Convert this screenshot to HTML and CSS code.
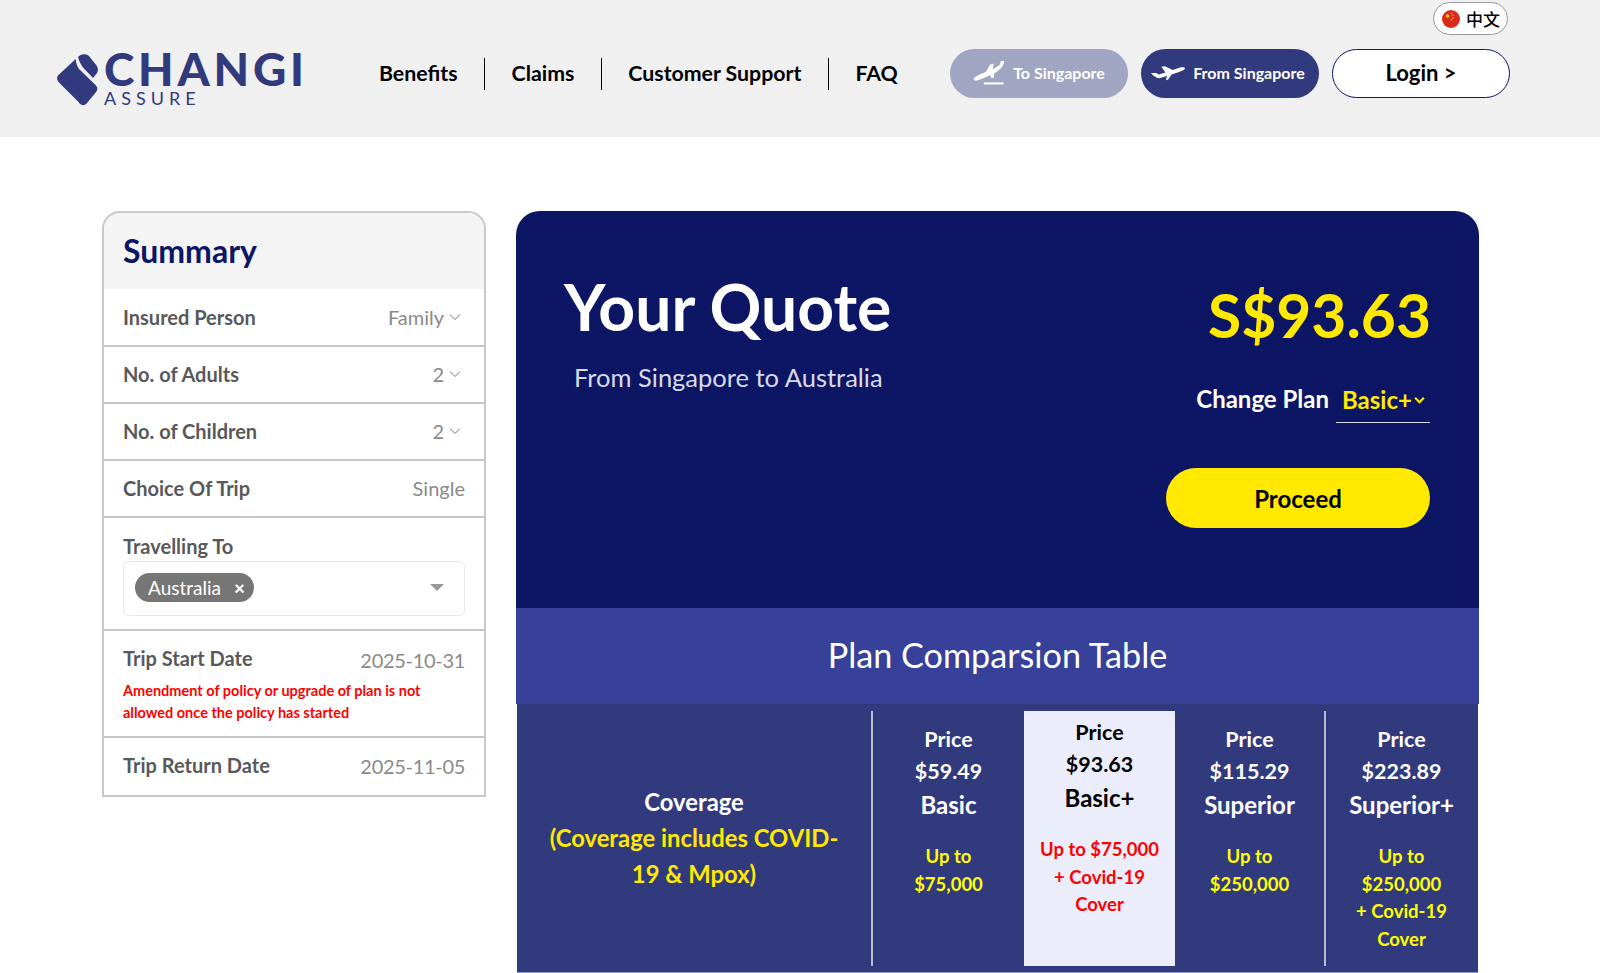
FILE: index.html
```html
<!DOCTYPE html>
<html lang="en">
<head>
    <meta charset="UTF-8">
    <meta name="viewport" content="width=device-width, initial-scale=1.0">
    <title>Changi Assure - Your Quote</title>
    <link rel="stylesheet" href="styles.css">
</head>

<body>
    <div class="header">
        <a href="#" class="logo">
            <svg class="logo-mark" viewBox="0 0 42 52" width="42" height="52">
                <path d="M21 3C23 0 29-1 32 2L39.500 11.500C41.500 14 41 17 40 19L36 24 26 13.500C24 11 22 7 21 3z" fill="#323a7e"/>
                <path d="M18.700 5C19 9 20 12 22 15L37.500 30C40.500 32.500 41 35 39.500 37.500L30 49C27.500 52 24 52 21.500 48L1.500 28C-.5 25.500-.5 23 1.500 21z" fill="#323a7e"/>
            </svg>
            <div class="logo-text">
                <span class="logo-name">CHANGI</span>
                <span class="logo-sub">ASSURE</span>
            </div>
        </a>

        <div class="nav">
            <a href="#">Benefits</a>
            <a href="#">Claims</a>
            <a href="#">Customer Support</a>
            <a href="#">FAQ</a>
        </div>

        <div class="header-right">
            <a href="#" class="lang">
                <svg viewBox="0 0 18 18" width="18" height="18">
                    <circle cx="9" cy="9" r="9" fill="#dc2a1e"/>
                    <circle cx="5.500" cy="6" r="1.800" fill="#fbd116"/>
                    <circle cx="9.500" cy="3.500" r=".7" fill="#fbd116"/>
                    <circle cx="11" cy="5.500" r=".7" fill="#fbd116"/>
                    <circle cx="11" cy="8" r=".7" fill="#fbd116"/>
                    <circle cx="9.500" cy="10" r=".7" fill="#fbd116"/>
                </svg>
                中文
            </a>
            <div class="header-buttons">
                <a href="#" class="pill pill-light">
                    <svg viewBox="0 0 30 23" width="32" height="24">
                        <path d="M0 17C3 14 8 12 12 10.500L16 3.500 19.500 2.500 18.500 8 25 4 26.500 0H29.500C29.500 3 28 6 24 9L20 12 19.500 16 17.500 16.500 16 13.500C11 16 5 19 1.500 19z" fill="#fff"/>
                        <rect x="10" y="20.500" width="19" height="2" fill="#fff"/>
                    </svg>
                    To Singapore
                </a>
                <a href="#" class="pill pill-dark">
                    <svg viewBox="0 0 33 15" width="34" height="16">
                        <path d="M0 7.500H5L7.500 9 14 7 10 1.500 13.500 1 21 4.500 29 2C31 1.500 33 2 33 3C33 4.500 30 5.500 28 6.200L20 9 16.500 14 14.500 14.500 15.500 10.500 8 12.500C5 12.500 2 10 0 7.500z" fill="#fff"/>
                    </svg>
                    From Singapore
                </a>
                <a href="#" class="pill pill-login">Login &gt;</a>
            </div>
        </div>
    </div>

    <div class="content">
        <!-- left summary card -->
        <div class="summary">
            <div class="summary-title">Summary</div>
            <div class="summary-row">
                <span class="row-label">Insured Person</span>
                <span class="row-value">Family <svg class="chev" viewBox="0 0 12 8" width="12" height="8"><path d="M1 1.500l5 5 5-5" fill="none" stroke="#777" stroke-width="1"/></svg></span>
            </div>
            <div class="summary-row">
                <span class="row-label">No. of Adults</span>
                <span class="row-value">2 <svg class="chev" viewBox="0 0 12 8" width="12" height="8"><path d="M1 1.500l5 5 5-5" fill="none" stroke="#777" stroke-width="1"/></svg></span>
            </div>
            <div class="summary-row">
                <span class="row-label">No. of Children</span>
                <span class="row-value">2 <svg class="chev" viewBox="0 0 12 8" width="12" height="8"><path d="M1 1.500l5 5 5-5" fill="none" stroke="#777" stroke-width="1"/></svg></span>
            </div>
            <div class="summary-row">
                <span class="row-label">Choice Of Trip</span>
                <span class="row-value">Single</span>
            </div>
            <div class="summary-block travel">
                <span class="row-label">Travelling To</span>
                <div class="select-box">
                    <span class="tag">Australia <span class="tag-x">×</span></span>
                    <span class="caret"></span>
                </div>
            </div>
            <div class="summary-block start">
                <div class="date-line">
                    <span class="row-label">Trip Start Date</span>
                    <span class="row-value date">2025-10-31</span>
                </div>
                <p class="note">Amendment of policy or upgrade of plan is not allowed once the policy has started</p>
            </div>
            <div class="summary-block end">
                <div class="date-line">
                    <span class="row-label">Trip Return Date</span>
                    <span class="row-value date">2025-11-05</span>
                </div>
            </div>
        </div>

        <!-- quote + comparison -->
        <div class="quote">
            <div class="quote-top">
                <div class="quote-left">
                    <h1>Your Quote</h1>
                    <p>From Singapore to Australia</p>
                </div>
                <div class="quote-right">
                    <div class="price">S$93.63</div>
                    <div class="change-plan">
                        <span class="change-label">Change Plan</span>
                        <span class="plan-select">Basic+<svg viewBox="0 0 10 7" width="11" height="8"><path d="M1 1.500l4 4 4-4" fill="none" stroke="#ffe900" stroke-width="2"/></svg></span>
                    </div>
                    <a href="#" class="proceed">Proceed</a>
                </div>
            </div>

            <div class="table-title">Plan Comparsion Table</div>

            <div class="plan-table">
                <div class="coverage-col">
                    <div>Coverage</div>
                    <div class="yellow">(Coverage includes COVID-19&nbsp;&amp;&nbsp;Mpox)</div>
                </div>
                <div class="plan-col">
                    <div class="plan-price">Price<br>$59.49</div>
                    <div class="plan-name">Basic</div>
                    <div class="plan-cover">Up to<br>$75,000</div>
                </div>
                <div class="plan-col selected">
                    <div class="plan-price">Price<br>$93.63</div>
                    <div class="plan-name">Basic+</div>
                    <div class="plan-cover">Up to $75,000<br>+ Covid-19<br>Cover</div>
                </div>
                <div class="plan-col">
                    <div class="plan-price">Price<br>$115.29</div>
                    <div class="plan-name">Superior</div>
                    <div class="plan-cover">Up to<br>$250,000</div>
                </div>
                <div class="plan-col last">
                    <div class="plan-price">Price<br>$223.89</div>
                    <div class="plan-name">Superior+</div>
                    <div class="plan-cover">Up to<br>$250,000<br>+ Covid-19<br>Cover</div>
                </div>
            </div>
        </div>
    </div>
</body>
</html>
```

FILE: styles.css
```css
* {
    box-sizing: border-box;
}

body {
    font-family: 'Lato', 'Noto Sans CJK SC', sans-serif;
    margin: 0;
    height: 973px;
    overflow: hidden;
    background-color: #fff;
    color: #000;
}

a {
    text-decoration: none;
    color: inherit;
}

.header {
    height: 137px;
    background-color: #f0f0f0;
    display: flex;
    padding: 2px 90px 0 57px;
}

.logo {
    display: flex;
    align-items: flex-start;
    gap: 5px;
    width: 295px;
    padding-top: 52px;
}

.logo-mark {
    flex: none;
}

.logo-text {
    display: flex;
    flex-direction: column;
    margin-top: -2px;
}

.logo-name {
    font-size: 46px;
    line-height: 34px;
    font-weight: 900;
    color: #323a7e;
    letter-spacing: 3.8px;
}

.logo-sub {
    font-size: 18px;
    line-height: 16px;
    margin-top: 4px;
    color: #323a7e;
    letter-spacing: 5px;
}

.nav {
    display: flex;
    align-items: center;
    height: 32px;
    margin-top: 56px;
    font-size: 21.3px;
    font-weight: 700;
    white-space: nowrap;
}

.nav a {
    height: 32px;
    padding: 0 26.5px;
    line-height: 30px;
    border-left: 1px solid #000;
}

.nav a:first-child {
    border-left: none;
    padding-left: 27px;
}

.header-right {
    margin-left: auto;
    display: flex;
    flex-direction: column;
    align-items: flex-end;
}

.lang {
    display: flex;
    align-items: center;
    gap: 6px;
    width: 75px;
    height: 33px;
    padding-left: 8px;
    margin-right: 2px;
    background-color: #fff;
    border: 1px solid #999;
    border-radius: 17px;
    font-size: 17px;
    font-weight: 500;
}

.header-buttons {
    display: flex;
    gap: 13px;
    margin-top: 14px;
}

.pill {
    width: 178px;
    height: 49px;
    padding-bottom: 2px;
    border-radius: 25px;
    display: flex;
    align-items: center;
    justify-content: center;
    gap: 8px;
    font-size: 16px;
    font-weight: 700;
    color: #fff;
    white-space: nowrap;
}

.pill-light {
    background-color: #a0a5c2;
}

.pill-dark {
    background-color: #323a7e;
    padding-right: 4px;
}

.pill-login {
    background-color: #fff;
    border: 1px solid #0c1664;
    color: #000;
    font-size: 22px;
}

.content {
    display: flex;
    align-items: flex-start;
    gap: 30px;
    padding: 74px 0 0 102px;
}

.summary {
    width: 384px;
    border: 2px solid #c8c8c8;
    border-radius: 18px 18px 0 0;
    overflow: hidden;
    color: #58595b;
}

.summary-title {
    height: 76px;
    padding: 18px 19px 0;
    background-color: #f4f4f4;
    font-size: 32px;
    line-height: 40px;
    font-weight: 700;
    color: #0c1664;
}

.summary-row {
    height: 57px;
    padding: 0 19px 2px;
    display: flex;
    align-items: center;
    justify-content: space-between;
    border-bottom: 2px solid #c8c8c8;
}

.summary-row:nth-child(2) {
    height: 58px;
    padding-bottom: 0;
}

.row-label {
    font-size: 20px;
    font-weight: 700;
}

.row-value {
    font-size: 20px;
    color: #8a8a8a;
    display: flex;
    align-items: center;
    gap: 5px;
}

.row-value.date {
    letter-spacing: -0.3px;
}

.chev {
    margin-right: 4px;
}

.summary-block {
    padding: 0 19px;
    border-bottom: 2px solid #c8c8c8;
}

.summary-block.end {
    border-bottom: none;
}

.travel {
    height: 113px;
    padding-top: 16px;
}

.travel .row-label {
    display: block;
    line-height: 24px;
}

.select-box {
    height: 55px;
    margin-top: 3px;
    padding: 0 20px 3px 11px;
    display: flex;
    align-items: center;
    justify-content: space-between;
    border: 1px solid #e8e8e8;
    border-radius: 6px;
}

.tag {
    height: 29px;
    padding: 0 9px 0 13px;
    display: flex;
    align-items: center;
    gap: 13px;
    background-color: #767676;
    border-radius: 15px;
    color: #fff;
    font-size: 19px;
}

.tag-x {
    font-weight: 900;
    font-size: 19px;
}

.caret {
    border-left: 7px solid transparent;
    border-right: 7px solid transparent;
    border-top: 7px solid #999;
}

.start {
    height: 107px;
    padding-top: 15px;
}

.end {
    height: 57px;
    padding-top: 14px;
}

.date-line {
    display: flex;
    align-items: flex-start;
    justify-content: space-between;
    line-height: 28px;
}

.date-line .row-label {
    line-height: 24px;
}

.end .row-label {
    margin-top: 1px;
}

.note {
    margin: 6px 0 0;
    font-size: 14.5px;
    line-height: 22px;
    font-weight: 700;
    color: #ff0000;
}

.quote {
    width: 963px;
    height: 762px;
    color: #fff;
}

.quote-top {
    height: 397px;
    display: flex;
    justify-content: space-between;
    padding: 57px 49px 0 48px;
    background-color: #0c1664;
    border-radius: 24px 24px 0 0;
}

.quote-left h1 {
    margin: 0;
    font-size: 64.2px;
    line-height: 78px;
    font-weight: 700;
}

.quote-left p {
    margin: 15px 0 0 10px;
    font-size: 25.5px;
    line-height: 32px;
    color: #d9dbe8;
}

.quote-right {
    width: 264px;
    display: flex;
    flex-direction: column;
    align-items: flex-end;
}

.price {
    margin: 11px -1px 0 0;
    font-size: 60.5px;
    line-height: 72px;
    font-weight: 700;
    color: #ffe900;
}

.change-plan {
    display: flex;
    align-items: center;
    gap: 7px;
    margin-top: 28px;
    white-space: nowrap;
}

.change-label {
    margin-bottom: 6px;
    font-size: 24px;
    font-weight: 700;
}

.plan-select {
    width: 94px;
    height: 44px;
    padding: 0 0 2px 6px;
    display: flex;
    align-items: center;
    gap: 2px;
    border-bottom: 1px solid #d9dbe8;
    font-size: 24px;
    font-weight: 700;
    color: #ffe900;
}

.proceed {
    width: 264px;
    height: 60px;
    margin-top: 45px;
    display: flex;
    align-items: center;
    justify-content: center;
    border-radius: 30px;
    background-color: #ffe900;
    color: #000;
    font-size: 24px;
    font-weight: 700;
}

.table-title {
    height: 96px;
    padding-bottom: 3px;
    background-color: #374199;
    display: flex;
    align-items: center;
    justify-content: center;
    font-size: 34.2px;
}

.plan-table {
    height: 269px;
    padding: 7px 0 6px;
    margin: 0 1px;
    display: grid;
    grid-template-columns: 356px repeat(4, 151px);
    background-color: #323a7e;
    border-bottom: 1px solid #8d9cc9;
}

.coverage-col {
    border-right: 2px solid #b9bccf;
    display: flex;
    flex-direction: column;
    justify-content: center;
    padding: 0 16px 2px;
    text-align: center;
    font-size: 23.8px;
    line-height: 36px;
    font-weight: 700;
}

.yellow {
    color: #ffe900;
}

.plan-col {
    text-align: center;
    padding-top: 12px;
    font-weight: 700;
}

.plan-col.selected {
    background-color: #ebedfb;
    color: #000;
    padding-top: 5px;
}

.plan-col.selected + .plan-col {
    border-right: 2px solid #b9bccf;
}

.plan-price {
    font-size: 21.5px;
    line-height: 32px;
}

.plan-name {
    margin-top: 1px;
    font-size: 24px;
    line-height: 34px;
}

.plan-cover {
    margin-top: 21px;
    font-size: 18.5px;
    line-height: 27.5px;
    color: #ffff00;
}

.plan-col.selected .plan-cover {
    color: #ff0000;
}
```
